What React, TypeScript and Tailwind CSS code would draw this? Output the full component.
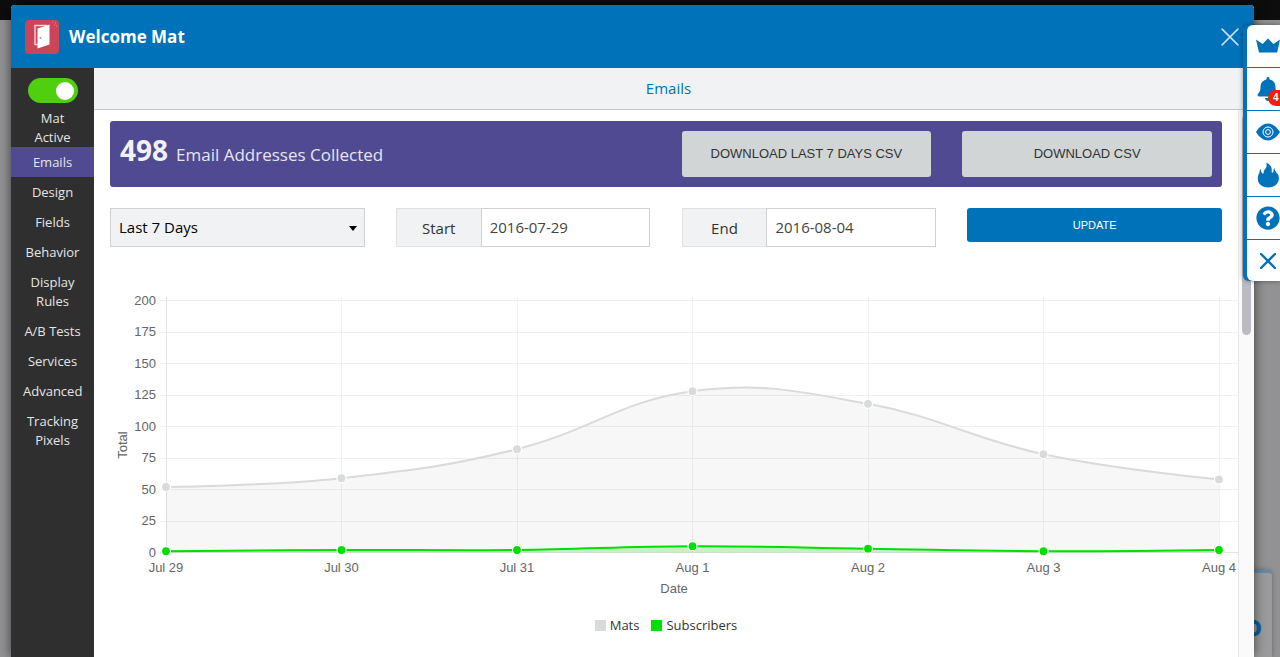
import React from 'react';
import { FaBell, FaQuestionCircle } from 'react-icons/fa';

interface Series {
  name: string;
  color: string;
  fill: string;
  swatch: string;
  values: number[];
}

const NAV_ITEMS = [
  'Emails',
  'Design',
  'Fields',
  'Behavior',
  'Display Rules',
  'A/B Tests',
  'Services',
  'Advanced',
  'Tracking Pixels',
];

const DAYS = ['Jul 29', 'Jul 30', 'Jul 31', 'Aug 1', 'Aug 2', 'Aug 3', 'Aug 4'];

const TICKS = [0, 25, 50, 75, 100, 125, 150, 175, 200];

const SERIES: Series[] = [
  {
    name: 'Mats',
    color: '#d9dbdb',
    fill: 'rgba(0,0,0,0.03)',
    swatch: 'bg-[#d9dbdb]',
    values: [52, 59, 82, 128, 118, 78, 58],
  },
  {
    name: 'Subscribers',
    color: '#00e000',
    fill: 'rgba(0,224,0,0.2)',
    swatch: 'bg-[#00e000]',
    values: [1, 2, 2, 5, 3, 1, 2],
  },
];

// Chart geometry, in viewBox units
const LEFT = 72;
const RIGHT = 1125;
const TOP = 13.5;
const BOTTOM = 265.5;
const TENSION = 0.4;

const xAt = (i: number) => LEFT + (i * (RIGHT - LEFT)) / (DAYS.length - 1);
const yAt = (value: number) => BOTTOM - (value * (BOTTOM - TOP)) / 200;

// Keep one unit wide grid lines crisp
const crisp = (n: number) => Math.floor(n) + 0.5;

// Smooth curve through the points, control points follow the neighbours' slope
const curve = (values: number[]) => {
  const pts = values.map((v, i) => ({ x: xAt(i), y: yAt(v) }));
  const slope = (i: number) => {
    const prev = pts[Math.max(i - 1, 0)];
    const next = pts[Math.min(i + 1, pts.length - 1)];
    const edge = i === 0 || i === pts.length - 1;
    return edge
      ? { x: 0, y: 0 }
      : { x: ((next.x - prev.x) * TENSION) / 2, y: ((next.y - prev.y) * TENSION) / 2 };
  };
  return pts.slice(1).reduce((d, p, i) => {
    const from = pts[i];
    const a = slope(i);
    const b = slope(i + 1);
    return `${d} C${from.x + a.x} ${from.y + a.y} ${p.x - b.x} ${p.y - b.y} ${p.x} ${p.y}`;
  }, `M${pts[0].x} ${pts[0].y}`);
};

const EmailChart: React.FC = () => (
  <svg
    viewBox="0 0 1144 316"
    className="mt-10 block h-auto w-full font-['Liberation_Sans',sans-serif] text-[13px]"
    role="img"
    aria-label="Mats and subscribers by date"
  >
    {TICKS.map((t) => (
      <g key={t}>
        <line
          x1={LEFT - 6}
          x2={1144}
          y1={crisp(yAt(t))}
          y2={crisp(yAt(t))}
          stroke={t === 0 ? '#e4e4e4' : '#f0f0f0'}
        />
        <text x={62} y={yAt(t) + 4} textAnchor="end" fill="#666">
          {t}
        </text>
      </g>
    ))}
    {DAYS.map((day, i) => (
      <g key={day}>
        <line
          x1={crisp(xAt(i))}
          x2={crisp(xAt(i))}
          y1={10}
          y2={BOTTOM + 5}
          stroke={i === 0 ? '#e4e4e4' : '#f0f0f0'}
        />
        <text x={xAt(i)} y={285} textAnchor="middle" fill="#666">
          {day}
        </text>
      </g>
    ))}
    {SERIES.map((s) => (
      <g key={s.name}>
        <path d={`${curve(s.values)} L${RIGHT} ${BOTTOM} L${LEFT} ${BOTTOM} Z`} fill={s.fill} />
        <path d={curve(s.values)} fill="none" stroke={s.color} strokeWidth="2" />
        {s.values.map((v, i) => (
          <circle key={i} cx={xAt(i)} cy={yAt(v)} r="4.5" fill={s.color} stroke="#fff" strokeWidth="1.2" />
        ))}
      </g>
    ))}
    <text x={580} y={306} textAnchor="middle" fill="#666">
      Date
    </text>
    <text transform="translate(33 158) rotate(-90)" textAnchor="middle" fill="#666">
      Total
    </text>
  </svg>
);

const DoorLogo: React.FC = () => (
  <svg viewBox="0 0 34 34" className="size-[34px]" aria-hidden="true">
    <rect width="34" height="34" rx="4" fill="#cb4459" />
    <path d="M22 5.5H10v19h3" fill="none" stroke="#f6d5da" strokeWidth="1.4" />
    <path d="M12.5 8.5 24.5 4.5v20L12.5 28.5z" fill="#fff" />
    <circle cx="15.5" cy="18" r="1" fill="#cb8a94" />
    <path d="M27 2h1M30 3h1M29 5h1M31 6h1" stroke="#e08391" strokeWidth="1" />
  </svg>
);

const CloseIcon: React.FC<{ className: string; strokeWidth: number }> = ({ className, strokeWidth }) => (
  <svg viewBox="0 0 16 16" className={className} aria-hidden="true">
    <path d="M1 1l14 14M15 1L1 15" stroke="currentColor" strokeWidth={strokeWidth} strokeLinecap="round" />
  </svg>
);

const CrownIcon: React.FC = () => (
  <svg viewBox="0 0 24 24" className="size-6 shrink-0" fill="currentColor" aria-hidden="true">
    <path d="M0 5.5 6.5 10 12 4.5l5.500 5.500L24 5.500 21.200 18.500H3z" />
  </svg>
);

const EyeIcon: React.FC = () => (
  <svg viewBox="0 0 24 24" className="size-6 shrink-0" fill="currentColor" aria-hidden="true">
    <path d="M0 12C3.5 6.5 7.5 3.5 12 3.5S20.500 6.500 24 12c-3.500 5.500-7.500 8.500-12 8.500S3.500 17.500 0 12z" />
    <circle cx="12" cy="12" r="5" fill="none" stroke="#fff" strokeWidth="1" />
    <circle cx="12" cy="12" r="2.4" fill="none" stroke="#fff" strokeWidth="1" />
  </svg>
);

const FlameIcon: React.FC = () => (
  <svg viewBox="0 0 24 26" className="h-[26px] w-6 shrink-0" fill="currentColor" aria-hidden="true">
    <path d="M10 0.500c5 2.300 6.300 5.500 5.600 9.500.3 1.300 1.500 1 1.800-.3.200-1.400 0-2.200 1-4.200-.3 2.800 1.600 4 2.400 5.500-.1 1 .3 1 .9.500 1.300 2.500 1.500 5.500.6 8C20.700 23.500 17 25.500 12.200 25.500 6 25.500 1.800 21.800 1.800 16.500c0-2.800.8-4.500 1.700-6C3.500 8.500 4 8 4.800 6.800c0 2.200.4 3.400 1.300 4.400 1 .6 1.700 0 1.600-1C7.500 7.500 12.500 6 10 .5z" />
  </svg>
);

const SideTools: React.FC = () => (
  <nav
    aria-label="Tools"
    className="absolute top-[25px] right-0 w-[37px] overflow-hidden rounded-l-md bg-[#0072ba] pl-1 text-[#0072ba] shadow-[0_0_5px_rgba(0,0,0,0.4)]"
  >
    <div className="divide-y divide-[#0072ba] overflow-hidden rounded-l-md bg-white [&>button]:flex [&>button]:h-[43px] [&>button]:w-full [&>button]:items-center [&>button]:pl-[9px] [&>button:last-child]:h-[41px]">
      <button type="button" aria-label="Upgrade">
        <CrownIcon />
      </button>
      <button type="button" aria-label="Notifications" className="relative">
        <FaBell className="size-6 shrink-0" />
        <span className="absolute top-[22px] left-[21px] h-4 w-6 rounded-full bg-[#fb1c06] pl-[5px] text-left font-['Liberation_Sans',sans-serif] text-[10px] leading-4 font-bold text-white">
          4
        </span>
      </button>
      <button type="button" aria-label="Preview">
        <EyeIcon />
      </button>
      <button type="button" aria-label="Heat map">
        <FlameIcon />
      </button>
      <button type="button" aria-label="Help">
        <FaQuestionCircle className="size-6 shrink-0" />
      </button>
      <button type="button" aria-label="Close tools">
        <CloseIcon className="ml-1 size-4 shrink-0" strokeWidth={2.4} />
      </button>
    </div>
  </nav>
);

const Sidebar: React.FC = () => (
  <aside className="w-[83px] shrink-0 bg-[#2f2f2f] pt-2.5 text-center text-[13px] leading-[19px] text-[#e4e5e6]">
    <label className="flex flex-col items-center gap-1.5">
      <input
        type="checkbox"
        defaultChecked
        className="flex h-[25px] w-[50px] appearance-none items-center rounded-full bg-[#8a8a8a] px-1 before:size-[18px] before:rounded-full before:bg-white checked:justify-end checked:bg-[#50cf0e]"
      />
      <span className="w-12">Mat Active</span>
    </label>
    <nav>
      {NAV_ITEMS.map((item, i) => (
        <a
          key={item}
          href="#"
          aria-current={i === 0 ? 'page' : undefined}
          className="block px-3 pt-1.5 pb-[5px] aria-[current=page]:bg-[#504a93]"
        >
          {item}
        </a>
      ))}
    </nav>
  </aside>
);

const DateField: React.FC<{ id: string; label: string; value: string }> = ({ id, label, value }) => (
  <div className="flex h-[39px] text-[15px]">
    <label
      htmlFor={id}
      className="flex w-1/3 items-center justify-center border border-r-0 border-[#dfe1e3] bg-[#f1f2f4] pt-0.5 text-[#333]"
    >
      {label}
    </label>
    <input
      id={id}
      type="text"
      defaultValue={value}
      className="w-2/3 min-w-0 border border-[#cfd2d2] bg-white px-2 text-[#444]"
    />
  </div>
);

const EmailsPanel: React.FC = () => (
  <section className="min-w-0 flex-1">
    <div className="px-4 pt-[11px]">
      <div className="grid grid-cols-4 items-center gap-[31px] rounded-[3px] bg-[#504a93] p-2.5">
        <p className="col-span-2 pb-1.5 text-[#e6e6ee]">
          <strong className="mr-2 text-[28px] leading-8 font-bold text-[#f2f2f6]">498</strong>
          <span className="text-[17px]">Email Addresses Collected</span>
        </p>
        <button
          type="button"
          className="h-[46px] rounded-[3px] bg-[#d1d5d6] font-['Liberation_Sans',sans-serif] text-[13px] text-[#333]"
        >
          DOWNLOAD LAST 7 DAYS CSV
        </button>
        <button
          type="button"
          className="h-[46px] rounded-[3px] bg-[#d1d5d6] font-['Liberation_Sans',sans-serif] text-[13px] text-[#333]"
        >
          DOWNLOAD CSV
        </button>
      </div>

      <form className="mt-[21px] grid grid-cols-4 items-start gap-[31px]" onSubmit={(e) => e.preventDefault()}>
        <div className="relative">
          <select
            aria-label="Date range"
            className="block h-[39px] w-full appearance-none border border-[#cfd2d2] bg-[#f1f2f4] px-2 text-[15px] text-black"
          >
            <option>Last 7 Days</option>
          </select>
          <svg viewBox="0 0 8 5" className="pointer-events-none absolute top-[18px] right-2 h-[5px] w-2" aria-hidden="true">
            <path d="M0 0h8L4 5z" />
          </svg>
        </div>
        <DateField id="start" label="Start" value="2016-07-29" />
        <DateField id="end" label="End" value="2016-08-04" />
        <button
          type="submit"
          className="h-[34px] rounded-[3px] bg-[#0072ba] font-['Liberation_Sans',sans-serif] text-[11px] text-white"
        >
          UPDATE
        </button>
      </form>
    </div>

    <EmailChart />

    <ul className="mt-3 flex justify-center gap-3 text-[13px] leading-5 text-[#333]">
      {SERIES.map((s) => (
        <li key={s.name} className="flex items-center gap-1">
          <span className={`size-[11px] ${s.swatch}`} />
          {s.name}
        </li>
      ))}
    </ul>
  </section>
);

const App: React.FC = () => (
  <div className="relative flex min-h-screen flex-col overflow-hidden bg-[#929294] font-['Open_Sans',sans-serif]">
    {/* Dimmed page behind the dialog */}
    <div className="h-5 bg-[#0d0d0d]" />
    <div className="mt-auto mr-2 h-[87px] w-40 self-end overflow-hidden rounded-t-[5px] border-t-[3px] border-[#5d8cae] bg-[#9b9b9b] pt-9 pr-2.5 text-right text-[28px] leading-8 font-bold text-[#0862a3] shadow-[0_0_5px_rgba(0,0,0,0.3)]">
      o
    </div>

    <main className="absolute top-[5px] right-[26px] bottom-0 left-[11px] flex flex-col overflow-hidden rounded-t-[4px] bg-white shadow-[0_0_12px_rgba(0,0,0,0.6)]">
      <header className="flex h-[63px] shrink-0 items-center gap-2.5 bg-[#0072ba] pr-[15px] pl-[14px] text-white">
        <DoorLogo />
        <h1 className="flex-1 text-[17px] font-bold">Welcome Mat</h1>
        <button type="button" aria-label="Close" className="text-[#c9e0f0]">
          <CloseIcon className="size-[18px]" strokeWidth={1.4} />
        </button>
      </header>
      <div className="flex flex-1">
        <Sidebar />
        <div className="flex min-w-0 flex-1 flex-col">
          <div className="flex h-[42px] shrink-0 items-center justify-center border-b border-[#c5ccd1] bg-[#f1f2f4] pr-[11px]">
            <a href="#" className="text-[15px] text-[#0072ba]">
              Emails
            </a>
          </div>
          <div className="flex flex-1">
            <EmailsPanel />
            <div className="w-4 shrink-0 border-l border-[#e8e8e8] bg-[#fafafa] pt-[5px] pl-[3px]">
              <div className="h-[220px] w-[9px] rounded-full bg-[#bbbcc1]" />
            </div>
          </div>
        </div>
      </div>
    </main>

    <SideTools />
  </div>
);

export default App;
